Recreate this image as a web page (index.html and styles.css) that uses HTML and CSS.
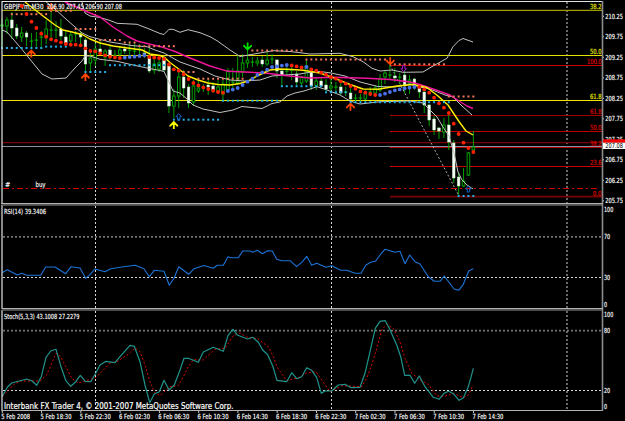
FILE: index.html
```html
<!DOCTYPE html>
<html lang="en">
<head>
    <meta charset="UTF-8">
    <meta name="viewport" content="width=device-width, initial-scale=1.0">
    <title>GBPJPYm,M30</title>
    <link rel="stylesheet" href="styles.css">
</head>
<body>
    <div class="terminal">
        <!-- Price window -->
        <div class="window price-window">
            <svg class="plot" viewBox="0 0 603 204">
                <g id="priceGrid" class="grid"></g>
                <g id="priceLevels"></g>
                <path class="trend" d="M390 65L459 196"/>
                <g id="candles"></g>
                <polyline class="band" points="82,2 85,13 90,16 100,17.5 110,20.5 117,23.3 137,24.3 150,29.3 160,33.5 164,34.5 169,29.3 173,29.3 180,32.3 188,29.7 200,32.7 210,36.7 217,40.7 230,50 240,56.5 257,53.5 273,50.7 290,51.5 300,52.7 310,54 340,53.3 353,56.7 363,61.7 372,68.3 380,71 392,70 403,72.3 423,72 433,66 447,58.3 453,46.7 459,40.5 463,38.5 473,42"/>
                <polyline class="band" points="45,1 55,9 67,20 82,33 90,36.7 110,42 133,45.7 147,46.7 155,50 164,53 180,62 200,69 215,76 230,80 245,81 260,80 272,76 285,75 300,74 308,72.5 320,71.5 331,73 345,76 360,82 378,86.5 395,87 410,84 420,87 430,89 445,95 453,97 462,106 472,115"/>
                <polyline class="band" points="2,30 7,32 20,47 33,63 42,74 52,79 66,78 75,68 82,61 85,56 90,56 100,59.3 117,61.3 133,65 147,68 160,70.5 164,71.5 168,80 173,91 180,93 187,99 193,105 203,109 220,112.5 233,110 242,106.5 262,108.5 272,103.5 280,102 287,96 295,93 304,91 317,86.7 327,90 340,95 350,101 360,104 380,101.7 410,101 423,103 430,110 437,117 443,127 449,136 454,153 458,172 462,180 467,185 473,189"/>
                <polyline class="ma-slow" points="65,2 90,13 100,17 113,27 127,36 137,41 147,43.5 163,47.3 175,51.5 190,58 210,66 228,71.3 250,72.3 267,73.3 287,75.7 310,78 333,77.3 367,78.3 390,79.5 410,82 420,84.5 433,89 450,95 459,101 467,106 473,108.5"/>
                <polyline class="ma-fast" points="25,2 43,16 55,25 63,30 72,32 82,34.5 90,39 100,43 113,46 133,48.7 142,50 150,54 160,55.5 165,58 170,62.5 180,70 188,76 198,80 208,83 218,84.5 230,85 240,83.5 248,81 258,75.5 270,70 280,69 292,69.5 303,70.3 320,73 333,77.7 350,84.5 363,89 378,89.3 397,86 413,84.5 427,87.5 438,96 448,105 459,121.5 466,131 473,135"/>
                <g id="stops"></g>
                <g id="trendDots"></g>
                <g id="arrows"></g>
                <path class="frame" d="M2 204V1.5H603"/>
                <text class="label" x="4" y="9" textLength="39.5" lengthAdjust="spacingAndGlyphs">GBPJPYm,M30</text>
                <text class="label" x="47" y="9" textLength="75" lengthAdjust="spacingAndGlyphs">206.90 207.45 206.90 207.08</text>
                <circle class="dot-down" cx="21.6" cy="6" r="2"/>
                <text class="label" x="5" y="187.3">#</text>
                <text class="label" x="35.5" y="187.3" textLength="10" lengthAdjust="spacingAndGlyphs">buy</text>
            </svg>
            <svg class="axis" viewBox="603 0 22 204" id="priceAxis"></svg>
        </div>

        <!-- RSI window -->
        <div class="window rsi-window">
            <svg class="plot" viewBox="0 204 603 105">
                <g id="rsiGrid" class="grid"></g>
                <polyline class="rsi" points="2,272.7 7.3,269.7 17.3,275 21.7,273.3 26.7,275.3 40.7,275.3 45.7,267 55,267 65.7,273.7 71,266.7 80,268 85.7,278.3 90,274.7 95,269 105,271.7 110.7,268.7 120,267.3 135,265.3 144,268.7 149.3,276.7 154.3,270.3 164,271.3 169.3,285.3 174,278.3 178.7,266.7 188.7,274.3 194,268.7 204,265.5 213.3,268.3 217.3,265.3 223.3,265.3 228,256.7 231,257.7 238.3,257.7 242.7,251 250,251 252.7,252.3 257.3,250.3 262.3,253.7 267.7,250.7 272.3,251 276.7,259.3 281.7,260.7 290,260.7 296.7,266.7 302.7,261.3 306.7,256.3 311.7,265.3 316.7,263.3 326,267.3 331.7,265.7 340.7,270.3 346.7,270.3 355,273.3 361,273.3 366,265 370.7,262.3 375.7,261 381,253.7 385,249.3 395,252.3 400,251.3 405,263.7 409.7,255 415,261.7 420,264 428.3,276.7 434.3,281.3 440,281.3 444.3,276 454,289 458.7,290.3 463.3,284.3 468.7,271 473.3,268.7"/>
                <path class="frame" d="M2 205V309"/>
                <path class="divider-light" d="M1 203.6H603"/>
                <path class="divider-dark" d="M2 205H603"/>
                <text class="label" x="4" y="213.7" textLength="42" lengthAdjust="spacingAndGlyphs">RSI(14) 39.3406</text>
            </svg>
            <svg class="axis" viewBox="603 204 22 105" id="rsiAxis"></svg>
        </div>

        <!-- Stochastic window -->
        <div class="window stoch-window">
            <svg class="plot" viewBox="0 309 603 102">
                <g id="stochGrid" class="grid"></g>
                <polyline class="stoch-signal" points="2,396.7 13.3,385 20,381 40,381 46.7,375 51.7,363.3 56,353.3 60.7,356.7 66.7,368.3 71.7,378.3 78.3,383 95,378 100,373.3 110,363.3 116.7,361.7 128.3,354.3 135,348 140,351.7 145,365 150,381.7 154.3,392.3 160,395.7 164,391.7 170,386.7 178.3,385.7 183.3,376.7 188.3,366.7 193.3,359.7 203.3,360 215,349.3 225,348.3 233.3,335.7 240,333 246.7,337 258.3,339 268.3,346.7 273.3,356.7 277.3,367.3 286.7,380.7 300,377 306.7,373 316,371.7 321.7,380 330,391.7 341.7,385.7 361.7,386.7 366.7,378.3 371.7,365 376.7,348.3 381.7,330 386.7,324.3 393.3,328.3 400,342 405,358.3 411.7,373.3 420,380 428.3,384.3 436.7,395.7 443.3,396.7 453.3,393.3 463.3,397.7 468.3,395 473.3,385"/>
                <polyline class="stoch-main" points="2,396.7 7.3,387.3 11.7,383 26.7,379 31.7,380.7 36.7,385.3 41.3,376.7 46,357.3 50.7,351 56,349.3 61,366.7 65.7,380.3 70.7,386.3 75.3,382.3 80.3,375.3 85.3,381.3 90.7,381.7 95.7,373.3 100,365 106,361.3 115,362.7 120,356.7 130,345.3 134.3,346.3 140,361.7 145,385 149.7,402.7 154.3,394 159.3,391.7 164,380.3 169,390 174.3,385 180,370 184,358.3 188.3,358.3 198.3,362.3 203.3,352 213.3,347.3 223.3,351.3 228,335.7 233,329.3 237.7,335.3 247.7,339 252.7,337.3 258.3,342.3 262.7,350 267.7,354.7 272.7,366 277,380.3 286.7,381.7 291.7,372.7 296.7,378.7 301.7,376.7 306.7,367.7 311.7,370.3 316.7,377.7 321.3,393.3 325,391 331.7,391 338.3,385 345,384.3 351,387.7 360,387.3 365,373.3 370,351.7 375.3,328.3 380,321.3 385.3,320.7 389.3,328.3 396.7,345 400.7,356.7 404.7,375.3 410,375.3 414.7,383.3 419.3,376 425,386.7 433.3,397.3 439,399.3 444,393.3 448.7,391.3 453.3,393.7 459,400.3 463.3,398 467.7,388.3 470.7,378.3 473.3,368.3"/>
                <path class="frame" d="M2 310V411"/>
                <path class="divider-light" d="M2 308.6H603"/>
                <path class="divider-dark" d="M2 310H603"/>
                <path class="divider-light" d="M2 410.5H603"/>
                <text class="label" x="4" y="318.7" textLength="75.5" lengthAdjust="spacingAndGlyphs">Stoch(5,3,3) 43.1008 27.2279</text>
                <text class="copyright" x="4" y="408.7" textLength="229.5" lengthAdjust="spacingAndGlyphs">Interbank FX Trader 4, © 2001-2007 MetaQuotes Software Corp.</text>
            </svg>
            <svg class="axis" viewBox="603 309 22 102" id="stochAxis"></svg>
        </div>

        <svg class="time-axis" viewBox="0 411 625 10" id="timeAxis"></svg>
    </div>
    <script src="chart.js"></script>
</body>
</html>
```
FILE: styles.css
```css
/* General Styles */
* {
    box-sizing: border-box;
}

html, body {
    height: 100%;
    margin: 0;
    background-color: #000;
    font-family: "DejaVu Sans Condensed", "DejaVu Sans", sans-serif;
    overflow: hidden;
}

/* Layout */
.terminal {
    width: 625px;
    height: 421px;
    display: flex;
    flex-direction: column;
}

.window {
    display: flex;
}

.price-window {
    height: 204px;
}

.rsi-window {
    height: 105px;
}

.stoch-window {
    height: 102px;
}

svg {
    overflow: visible;
}

.plot {
    width: 603px;
    height: 100%;
}

.axis {
    width: 22px;
    height: 100%;
}

.time-axis {
    width: 625px;
    height: 10px;
}

/* Text */
.label {
    font-size: 7px;
    fill: #fff;
    stroke: #fff;
    stroke-width: 0.15;
}

.copyright {
    font-family: "DejaVu Sans", sans-serif;
    font-size: 8.3px;
    fill: #fff;
    stroke: #fff;
    stroke-width: 0.2;
}

.level-yellow {
    font-size: 7px;
    fill: #f0f000;
    stroke: #f0f000;
    stroke-width: 0.15;
}

.level-red {
    font-size: 7px;
    fill: #e00000;
    stroke: #e00000;
    stroke-width: 0.15;
}

.current {
    font-size: 6.8px;
    fill: #000;
}

/* Lines */
polyline {
    fill: none;
    stroke-linejoin: round;
}

.band {
    stroke: #c0c0c0;
    stroke-width: 1;
}

.ma-slow {
    stroke: #f0149a;
    stroke-width: 1.4;
}

.ma-fast {
    stroke: #fff000;
    stroke-width: 1.4;
}

.rsi {
    stroke: #1c74d8;
    stroke-width: 1.1;
}

.stoch-main {
    stroke: #20948c;
    stroke-width: 1.2;
}

.stoch-signal {
    stroke: #e00000;
    stroke-width: 1;
    stroke-dasharray: 2 2;
}

.trend {
    stroke: #b0b0b0;
    stroke-dasharray: 2 2;
}

.grid path {
    stroke: #d8d8d8;
    stroke-width: 1;
    stroke-dasharray: 2 2;
}

.grid .dim {
    stroke: #747474;
    stroke-width: 1.8;
}

/* Frame */
.frame {
    fill: none;
    stroke: #e4e4e4;
    stroke-width: 1.2;
}

.divider-light {
    stroke: #b4b4b4;
    stroke-width: 1.2;
}

.divider-dark {
    stroke: #646464;
    stroke-width: 1.4;
}

.axis-line {
    stroke: #8c8c8c;
    stroke-width: 1.6;
}

.tick {
    stroke: #c8c8c8;
    stroke-width: 1;
}

/* Candles */
.candle {
    stroke: #00b000;
    stroke-width: 0.9;
    fill: #000;
}

.candle.down rect {
    fill: #fff;
    stroke: #b8f0b8;
    stroke-width: 0.5;
}

/* Indicator dots */
.stop-high {
    fill: #f07858;
}

.stop-low {
    fill: #20b0e8;
}

.dot-down {
    fill: #ff2000;
}

.dot-up {
    fill: #4870e8;
}

.arrow {
    fill: none;
    stroke-width: 1.8;
}

.arrow.hollow {
    stroke-width: 1;
}
```
FILE: chart.js
```javascript
var NS = 'http://www.w3.org/2000/svg';

function add(parent, tag, attrs, text) {
    var el = document.createElementNS(NS, tag);
    for (var key in attrs) {
        el.setAttribute(key, attrs[key]);
    }
    if (text) el.textContent = text;
    parent.appendChild(el);
    return el;
}

function byId(id) {
    return document.getElementById(id);
}

// x of a bar
function barX(i) {
    return 2 + i * 4.91;
}

// [high, low, body top, body bottom, 1 = bearish]
var bars = [
    [19, 48, 25, 26, 0], [17, 34, 20, 26, 0], [12, 39, 20, 28, 1], [24, 39, 28, 36, 1],
    [27, 42, 33, 37, 0], [31, 46, 33, 37, 1], [33, 48, 41, 41, 0], [32, 48, 40, 40, 0],
    [31, 48, 37, 37, 0], [20, 44, 29, 37, 0], [10, 38, 30, 30, 0], [21, 38, 30, 30, 0],
    [19, 40, 29, 36, 1], [31, 45, 37, 43, 1], [32, 46, 35, 41, 0], [31, 42, 34, 34, 0],
    [31, 44, 34, 37, 1], [38, 72, 40, 64, 1], [50, 72, 58, 63, 0], [43, 66, 49, 60, 0],
    [39, 55, 49, 52, 1], [49, 66, 51, 57, 0], [45, 60, 50, 56, 1], [50, 58, 55, 55, 0],
    [46, 57, 50, 54, 0], [46, 54, 49, 51, 1], [43, 56, 50, 50, 0], [43, 55, 51, 51, 0],
    [44, 56, 49, 49, 0], [48, 58, 53, 56, 1], [48, 73, 56, 71, 1], [58, 74, 64, 70, 0],
    [60, 72, 63, 69, 0], [56, 72, 57, 70, 1], [64, 113, 66, 106, 1], [89, 118, 96, 106, 0],
    [72, 108, 77, 96, 0], [70, 98, 77, 88, 1], [84, 108, 87, 103, 1], [80, 106, 86, 102, 0],
    [79, 93, 88, 91, 0], [84, 92, 87, 87, 0], [79, 95, 85, 87, 1], [82, 93, 86, 90, 1],
    [80, 93, 87, 92, 0], [80, 100, 84, 94, 0], [68, 92, 71, 90, 0], [68, 88, 82, 82, 0],
    [55, 85, 71, 83, 0], [54, 77, 63, 72, 0], [50, 68, 60, 63, 0], [57, 67, 62, 62, 0],
    [57, 66, 61, 63, 0], [56, 67, 60, 64, 1], [51, 66, 60, 64, 0], [54, 64, 59, 59, 0],
    [59, 78, 60, 71, 1], [70, 86, 71, 75, 1], [66, 76, 71, 71, 0], [65, 80, 70, 70, 0],
    [71, 85, 74, 82, 1], [76, 85, 77, 83, 0], [60, 83, 66, 81, 0], [68, 90, 71, 86, 1],
    [77, 90, 81, 86, 0], [77, 87, 81, 86, 1], [79, 91, 85, 89, 1], [78, 93, 86, 88, 0],
    [82, 92, 87, 87, 0], [83, 95, 87, 93, 1], [87, 96, 92, 92, 0], [88, 100, 93, 99, 1],
    [94, 102, 98, 98, 0], [94, 102, 98, 98, 0], [90, 100, 93, 99, 0], [87, 96, 92, 92, 0],
    [85, 94, 88, 93, 0], [74, 92, 79, 90, 0], [70, 84, 73, 77, 0], [65, 80, 75, 75, 0],
    [68, 82, 76, 78, 1], [73, 84, 77, 77, 0], [70, 93, 75, 86, 1], [75, 94, 80, 84, 0],
    [78, 90, 79, 86, 1], [85, 98, 87, 92, 1], [90, 113, 92, 105, 1], [104, 126, 105, 120, 1],
    [116, 135, 119, 130, 1], [127, 139, 128, 131, 1], [118, 138, 125, 132, 0], [112, 150, 125, 142, 1],
    [140, 183, 143, 178, 1], [172, 195, 177, 186, 1], [168, 187, 181, 186, 0], [152, 176, 153, 175, 0],
    [131, 153, 147, 150, 0]
];

bars.forEach(function (b, i) {
    var x = barX(i);
    var g = add(byId('candles'), 'g', { 'class': b[4] ? 'candle down' : 'candle' });
    add(g, 'path', { d: 'M' + x + ' ' + b[0] + 'V' + b[1] });
    add(g, 'rect', { x: x - 1.3, y: b[2], width: 2.6, height: Math.max(b[3] - b[2], 0.2) });
});

// Parabolic stops: [first bar, last bar, y]
function drawStops(runs, cls) {
    runs.forEach(function (r) {
        for (var i = r[0]; i <= r[1]; i++) {
            add(byId('stops'), 'rect', { 'class': cls, x: barX(i) - 1, y: r[2] - 1, width: 2, height: 2 });
        }
    });
}

drawStops([[2, 9, 14.2], [10, 14, 10.8], [15, 19, 29], [20, 24, 40], [25, 27, 42.5], [28, 35, 46.2],
    [37, 39, 72], [40, 49, 78.7], [51, 61, 50.5], [62, 78, 59.5], [80, 90, 64.3], [91, 96, 96.5]], 'stop-high');
drawStops([[0, 8, 48], [9, 13, 46.6], [17, 21, 72], [22, 33, 65.2], [35, 44, 119.7], [45, 56, 100.7],
    [57, 65, 86.2], [66, 70, 92.3], [71, 91, 102.2], [93, 96, 196]], 'stop-low');

// Trend dots from bar 5, "up" ranges are blue
var dots = [14, 21.7, 28, 33.7, 36.7, 39.3, 40.7, 42.3, 44, 44.7, 44.7, 45.3, 48.3, 51, 51.3, 53.3, 55.3,
    56.7, 57.3, 58, 57.5, 57, 56.7, 56, 55.2, 57, 57.5, 58, 59, 64.5, 69.3, 70.7, 74.3, 79, 83, 85.4, 87.4,
    89, 90.7, 92, 92.7, 91, 89.6, 88, 85, 81.7, 78.7, 75, 72.4, 69.7, 67, 66.4, 65.6, 65, 65.4, 66.4, 67.4,
    67, 69.4, 70.7, 72.7, 74.7, 77, 78.7, 81.3, 83.7, 86, 88.7, 91.4, 92.7, 94, 95, 95, 93.7, 92, 90.4,
    89.4, 88.4, 87.7, 87, 87, 89.4, 92.7, 97.7, 103.3, 107.7, 113, 123.7, 134, 142.7, 148, 152];
var upRanges = [[25, 29], [46, 58], [62, 62], [77, 84]];

dots.forEach(function (y, n) {
    var i = n + 5;
    var up = upRanges.some(function (r) { return i >= r[0] && i <= r[1]; });
    add(byId('trendDots'), 'circle', { 'class': up ? 'dot-up' : 'dot-down', cx: barX(i), cy: y, r: 1.9 });
});

// Signal arrows: [x, y, colour, 1 = down, 1 = hollow]
[
    [31.3, 53.5, '#ff4500', 0, 0], [85.4, 77, '#ff4500', 0, 0], [350.5, 106.7, '#ff4500', 0, 0],
    [51.2, 7, '#ff4500', 1, 0], [390.2, 61.3, '#ff4500', 1, 0], [247.6, 46.5, '#00e000', 1, 0],
    [173.8, 125, '#ffff00', 0, 0], [178.7, 116.7, '#1060c8', 0, 1], [468.4, 189, '#1060c8', 0, 1],
    [403.7, 68.7, '#a010c0', 1, 1]
].forEach(function (a) {
    add(byId('arrows'), 'path', {
        'class': a[4] ? 'arrow hollow' : 'arrow',
        stroke: a[2],
        d: a[4] ? 'M-1.2 3V0H-2.8L0 -3L2.8 0H1.2V3Z' : 'M0 4V-3M-3.5 1.5V0.5L0 -3L3.5 0.5V1.5',
        transform: 'translate(' + a[0] + ' ' + a[1] + ')' + (a[3] ? ' scale(1 -1)' : '')
    });
});

// Day separators and indicator levels
function drawGrid(id, top, bottom, levels) {
    var g = byId(id);
    add(g, 'path', { d: 'M95.5 ' + top + 'V' + bottom });
    add(g, 'path', { d: 'M331.5 ' + top + 'V' + bottom });
    add(g, 'path', { 'class': 'dim', d: 'M567 ' + top + 'V' + bottom });
    levels.forEach(function (l) {
        add(g, 'path', { 'class': l[1], d: 'M3 ' + l[0] + 'H602' });
    });
}

drawGrid('priceGrid', 2, 204, []);
drawGrid('rsiGrid', 206, 309, [[236.8, 'dim'], [277.5, '']]);
drawGrid('stochGrid', 311, 410, [[330.7, 'dim'], [390.5, '']]);

// Fibonacci and price levels: [y, x start, colour, width, label, label class, label baseline]
[
    [10.4, 2, '#a09a00', 1.3, '38.2', 'level-yellow', 8.8],
    [55.5, 2, '#e8e000', 1, '50.0', 'level-yellow', 54],
    [100.5, 2, '#f0e800', 1, '61.8', 'level-yellow', 99],
    [65.5, 390, '#c80000', 1, '100.0', 'level-red', 64.3],
    [115.5, 390, '#a00000', 1, '61.8', 'level-red', 114.3],
    [131.5, 390, '#c00000', 1, '50.0', 'level-red', 130],
    [142.6, 2, '#780000', 1.4, '', '', 0],
    [147.5, 390, '#b00000', 1, '38.2', 'level-red', 146.3],
    [146.5, 2, '#8890a0', 1, '', '', 0],
    [166.5, 390, '#c00000', 1, '23.6', 'level-red', 165],
    [196.6, 390, '#780000', 1.6, '0.0', 'level-red', 195.6]
].forEach(function (l) {
    add(byId('priceLevels'), 'path', { d: 'M' + l[1] + ' ' + l[0] + 'H602', stroke: l[2], 'stroke-width': l[3] });
    if (l[4]) {
        var width = l[4].length * 2.9;
        add(byId('priceLevels'), 'text', {
            'class': l[5], x: 601.5 - width, y: l[6], textLength: width, lengthAdjust: 'spacingAndGlyphs'
        }, l[4]);
    }
});
add(byId('priceLevels'), 'path', { d: 'M3 188.5H598', stroke: '#d80000', 'stroke-dasharray': '6 3 2 3' });

// Right axes
function drawAxis(id, top, bottom, labels, x, ticks) {
    var svg = byId(id);
    add(svg, 'path', { 'class': 'axis-line', d: 'M602.5 ' + top + 'V' + bottom });
    labels.forEach(function (l) {
        add(svg, 'text', {
            'class': 'label', x: x, y: l[1],
            textLength: l[0].length * (l[0].length > 4 ? 2.95 : 3.1), lengthAdjust: 'spacingAndGlyphs'
        }, l[0]);
        if (ticks) {
            add(svg, 'path', { 'class': 'tick', d: 'M603 ' + (l[1] - 2.5) + 'h1' });
        }
    });
}

var prices = [];
for (var n = 0; n < 10; n++) {
    prices.push([(210.25 - n * 0.5).toFixed(2), 18.8 + n * 20.5]);
}
drawAxis('priceAxis', 1, 204, prices, 605.3, true);
add(byId('priceAxis'), 'rect', { x: 603, y: 139.3, width: 22, height: 3.5, fill: '#f00000' });
add(byId('priceAxis'), 'rect', { x: 603, y: 142.7, width: 22, height: 6.3, fill: '#fff' });
add(byId('priceAxis'), 'text', {
    'class': 'current', x: 605.3, y: 148.4, textLength: 17.7, lengthAdjust: 'spacingAndGlyphs'
}, '207.08');
drawAxis('rsiAxis', 204, 309, [['100', 212], ['70', 239.3], ['30', 280], ['0', 307.3]], 604, false);
drawAxis('stochAxis', 309, 411, [['100', 317], ['80', 333], ['20', 393], ['0', 409.3]], 604, false);

// Time axis
['5 Feb 2008', '5 Feb 18:30', '5 Feb 22:30', '6 Feb 02:30', '6 Feb 06:30', '6 Feb 10:30', '6 Feb 14:30',
    '6 Feb 18:30', '6 Feb 22:30', '7 Feb 02:30', '7 Feb 06:30', '7 Feb 10:30', '7 Feb 14:30'
].forEach(function (t, i) {
    add(byId('timeAxis'), 'path', { 'class': 'tick', d: 'M' + (2.3 + i * 39.27) + ' 411v2' });
    add(byId('timeAxis'), 'text', {
        'class': 'label', x: 1.2 + i * 39.27, y: 419,
        textLength: i ? 31 : 29, lengthAdjust: 'spacingAndGlyphs'
    }, t);
});
```
